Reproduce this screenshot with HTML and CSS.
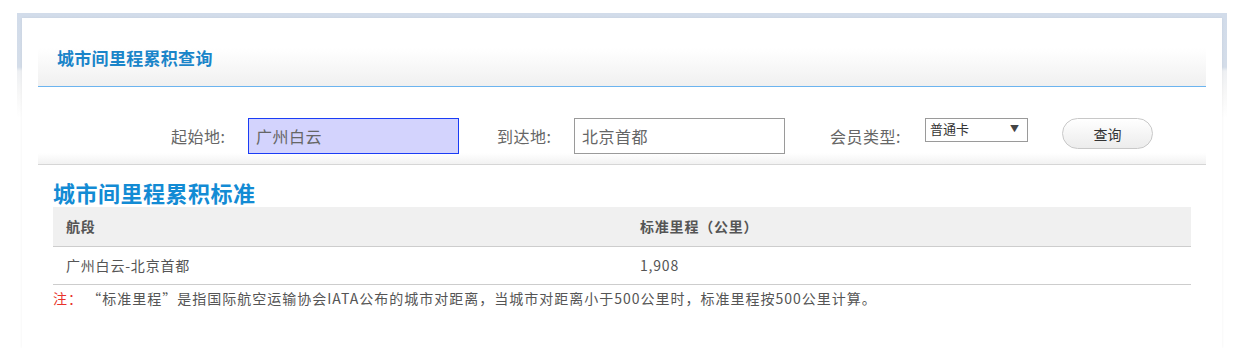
FILE: index.html
```html
<!DOCTYPE html>
<html lang="zh-CN">

<head>
  <meta charset="UTF-8">
  <title>城市间里程累积查询</title>
  <link rel="stylesheet" href="styles.css">
</head>

<body>
  <div class="frame">
    <div class="panel">
      <div class="panel-head">城市间里程累积查询</div>

      <div class="search">
        <label class="search-label">起始地:</label>
        <input class="search-input active" type="text" value="广州白云">
        <label class="search-label to">到达地:</label>
        <input class="search-input" type="text" value="北京首都">
        <label class="search-label member">会员类型:</label>
        <div class="select">
          <span>普通卡</span>
          <span class="select-arrow">▼</span>
        </div>
        <button class="search-btn">查询</button>
      </div>

      <div class="result">
        <h2 class="result-title">城市间里程累积标准</h2>
        <table class="result-table">
          <tr>
            <th class="col-seg">航段</th>
            <th>标准里程（公里）</th>
          </tr>
          <tr>
            <td>广州白云-北京首都</td>
            <td>1,908</td>
          </tr>
        </table>
        <p class="note"><span class="note-tag">注：</span>&nbsp;“标准里程”是指国际航空运输协会IATA公布的城市对距离，当城市对距离小于500公里时，标准里程按500公里计算。</p>
      </div>
    </div>
  </div>
</body>

</html>
```
FILE: styles.css
```css
* {
  padding: 0;
  margin: 0;
  box-sizing: border-box;
}

body {
  background: #fff;
  font-family: "Microsoft YaHei", "Noto Sans CJK SC", "Liberation Sans", sans-serif;
  color: #666;
}

.frame {
  margin: 13px 13px 0 17px;
  padding: 5px 5px 0;
  background: linear-gradient(to bottom, #d2dcea 0, #d4dde9 54px, #eef0f3 58px, #f7f7f7 80px, #fff 105px);
}

.panel {
  background: #fff;
  padding: 22px 16px 40px;
  box-shadow: 0 0 3px rgba(0, 0, 0, 0.06);
}

.panel-head {
  height: 47px;
  line-height: 36px;
  padding-left: 19px;
  font-size: 17px;
  font-weight: bold;
  letter-spacing: 0.3px;
  color: #1a85c9;
  background: linear-gradient(to bottom, #fff 0, #fff 8px, #f0f0f0 100%);
  border-bottom: 1px solid #6cb4ef;
}

.search {
  display: flex;
  align-items: flex-start;
  padding: 31px 0 10px 133px;
  border-bottom: 1px solid #d6d6d6;
  background: linear-gradient(to bottom, #fff 0, #fff 66px, #f2f2f2 100%);
}

.search-label {
  width: 77px;
  height: 36px;
  line-height: 36px;
  font-size: 16px;
  letter-spacing: 0.5px;
  color: #666;
}

.search-label.to {
  margin-left: 38px;
}

.search-label.member {
  width: 95px;
  margin-left: 45px;
}

.search-input {
  width: 211px;
  height: 36px;
  border: 1px solid #9a9a9a;
  background: #fff;
  padding-left: 7px;
  font-family: inherit;
  font-size: 16px;
  letter-spacing: 0.5px;
  color: #666;
  outline: none;
}

.search-input.active {
  background: #d3d3fd;
  border-color: #1a3cf5;
}

.select {
  width: 103px;
  height: 24px;
  border: 1px solid #9a9a9a;
  display: flex;
  justify-content: space-between;
  padding: 0 8px 0 4px;
  font-size: 13px;
  line-height: 20px;
  color: #333;
}

.select-arrow {
  font-size: 9px;
  color: #444;
}

.search-btn {
  margin-left: 34px;
  width: 91px;
  height: 31px;
  border: 1px solid #c8c8c8;
  border-radius: 16px;
  background: linear-gradient(to bottom, #fff, #ececec);
  font-family: inherit;
  font-size: 14px;
  color: #333;
}

.result {
  margin: 0 15px;
}

.result-title {
  margin-top: 12px;
  height: 30px;
  line-height: 30px;
  font-size: 22px;
  font-weight: bold;
  letter-spacing: 0.5px;
  color: #138bd4;
}

.result-table {
  width: 100%;
  border-collapse: collapse;
  font-size: 14px;
  letter-spacing: 0.8px;
  color: #555;
}

.result-table th {
  height: 39px;
  background: #f0f0f0;
  text-align: left;
  padding-left: 13px;
  border-bottom: 1px solid #cdcdcd;
}

.result-table th.col-seg {
  width: 574px;
}

.result-table td {
  height: 38px;
  padding-left: 13px;
  border-bottom: 1px solid #cdcdcd;
}

.note {
  margin-top: 3px;
  font-size: 14px;
  line-height: 20px;
  letter-spacing: 1px;
  color: #555;
}

.note-tag {
  color: #e8322b;
}
```
